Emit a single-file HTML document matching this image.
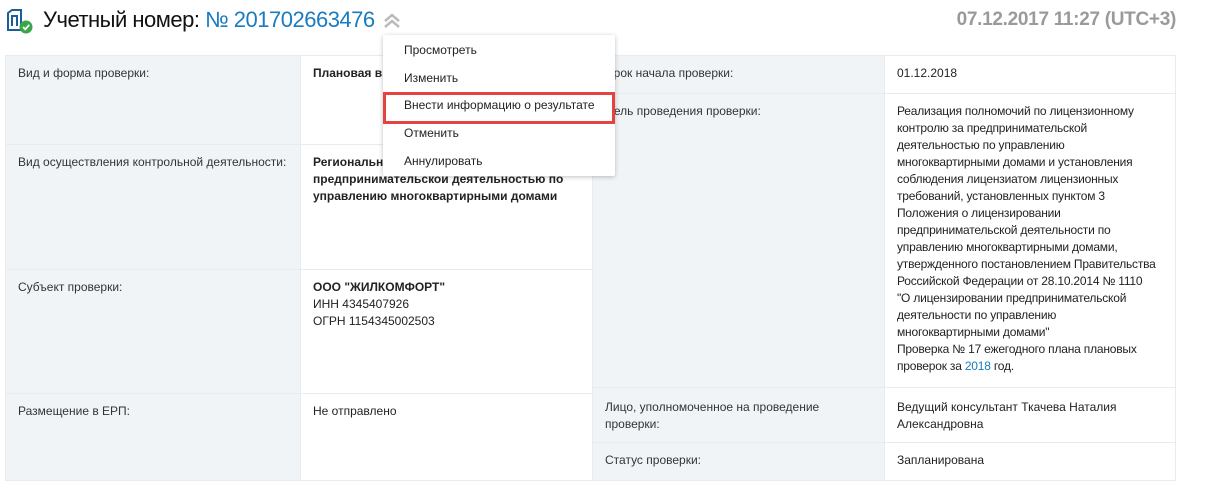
<!DOCTYPE html>
<html><head><meta charset="utf-8"><style>
*{margin:0;padding:0;box-sizing:border-box}
body{width:1208px;height:485px;background:#fff;font-family:"Liberation Sans",sans-serif;color:#222;position:relative;overflow:hidden;font-size:12px}
.abs{position:absolute}
.title{left:43px;top:7px;font-size:22px;color:#111;letter-spacing:-0.5px;white-space:nowrap}
.title span{color:#1a7bbf}
.date{right:32px;top:9px;font-size:19px;color:#9a9a9a;font-weight:bold;letter-spacing:-0.3px}
.cell{position:absolute;border:1px solid #e8ecef;padding:9px 12px;line-height:17px;white-space:nowrap}
.l{background:#f1f4f6;color:#333}
.v{background:#fff}
b{font-weight:bold}
.menu{left:383px;top:35px;width:232px;height:141px;background:#fff;box-shadow:0 1px 5px rgba(0,0,0,.25);border-radius:2px}
.menu div{position:absolute;left:21px;font-size:12px;color:#222}
.red{left:383px;top:92px;width:232px;height:32px;border:3px solid #e4443f}
a{color:#1a7bbf;text-decoration:none}
</style></head><body>
<svg class="abs" style="left:6px;top:9px" width="28" height="26" viewBox="0 0 28 26">
<path d="M2 4 L6 1 L15 1 L15 21 L2 21 Z" fill="none" stroke="#1b5f9a" stroke-width="2"/>
<path d="M6 17 V7 H11 V17" fill="none" stroke="#1b5f9a" stroke-width="2"/>
<circle cx="20" cy="18" r="6.5" fill="#3aa64a"/>
<path d="M17 18 L19.3 20.3 L23.3 15.8" fill="none" stroke="#fff" stroke-width="1.8"/>
</svg>
<div class="abs title">Учетный номер: <span>№ 201702663476</span></div>
<svg class="abs" style="left:383px;top:13px" width="18" height="16" viewBox="0 0 18 16">
<path d="M2 8 L9 2 L16 8 M2 14 L9 8 L16 14" fill="none" stroke="#bbb" stroke-width="2.5"/>
</svg>
<div class="abs date">07.12.2017 11:27 (UTC+3)</div>

<div class="cell l" style="left:5px;top:55px;width:296px;height:90px">Вид и форма проверки:</div>
<div class="cell v" style="left:300px;top:55px;width:293px;height:90px"><b>Плановая выездная</b></div>
<div class="cell l" style="left:5px;top:144px;width:296px;height:126px">Вид осуществления контрольной деятельности:</div>
<div class="cell v" style="left:300px;top:144px;width:293px;height:126px"><b>Региональный государственный надзор за<br>предпринимательской деятельностью по<br>управлению многоквартирными домами</b></div>
<div class="cell l" style="left:5px;top:269px;width:296px;height:125px">Субъект проверки:</div>
<div class="cell v" style="left:300px;top:269px;width:293px;height:125px"><b>ООО "ЖИЛКОМФОРТ"</b><br>ИНН 4345407926<br>ОГРН 1154345002503</div>
<div class="cell l" style="left:5px;top:393px;width:296px;height:88px">Размещение в ЕРП:</div>
<div class="cell v" style="left:300px;top:393px;width:293px;height:88px">Не отправлено</div>

<div class="cell l" style="left:592px;top:55px;width:293px;height:39px">Срок начала проверки:</div>
<div class="cell v" style="left:884px;top:55px;width:292px;height:39px">01.12.2018</div>
<div class="cell l" style="left:592px;top:93px;width:293px;height:295px">Цель проведения проверки:</div>
<div class="cell v" style="left:884px;top:93px;width:292px;height:295px;padding-top:9px;letter-spacing:-0.2px">Реализация полномочий по лицензионному<br>контролю за предпринимательской<br>деятельностью по управлению<br>многоквартирными домами и установления<br>соблюдения лицензиатом лицензионных<br>требований, установленных пунктом 3<br>Положения о лицензировании<br>предпринимательской деятельности по<br>управлению многоквартирными домами,<br>утвержденного постановлением Правительства<br>Российской Федерации от 28.10.2014 № 1110<br>"О лицензировании предпринимательской<br>деятельности по управлению<br>многоквартирными домами"<br>Проверка № 17 ежегодного плана плановых<br>проверок за <a>2018</a> год.</div>
<div class="cell l" style="left:592px;top:387px;width:293px;height:56px;padding-top:11px">Лицо, уполномоченное на проведение<br>проверки:</div>
<div class="cell v" style="left:884px;top:387px;width:292px;height:56px;padding-top:11px">Ведущий консультант Ткачева Наталия<br>Александровна</div>
<div class="cell l" style="left:592px;top:442px;width:293px;height:39px">Статус проверки:</div>
<div class="cell v" style="left:884px;top:442px;width:292px;height:39px">Запланирована</div>

<div class="abs menu">
<div style="top:8px">Просмотреть</div>
<div style="top:36px">Изменить</div>
<div style="top:63px">Внести информацию о результате</div>
<div style="top:91px">Отменить</div>
<div style="top:119px">Аннулировать</div>
</div>
<div class="abs red"></div>
</body></html>
